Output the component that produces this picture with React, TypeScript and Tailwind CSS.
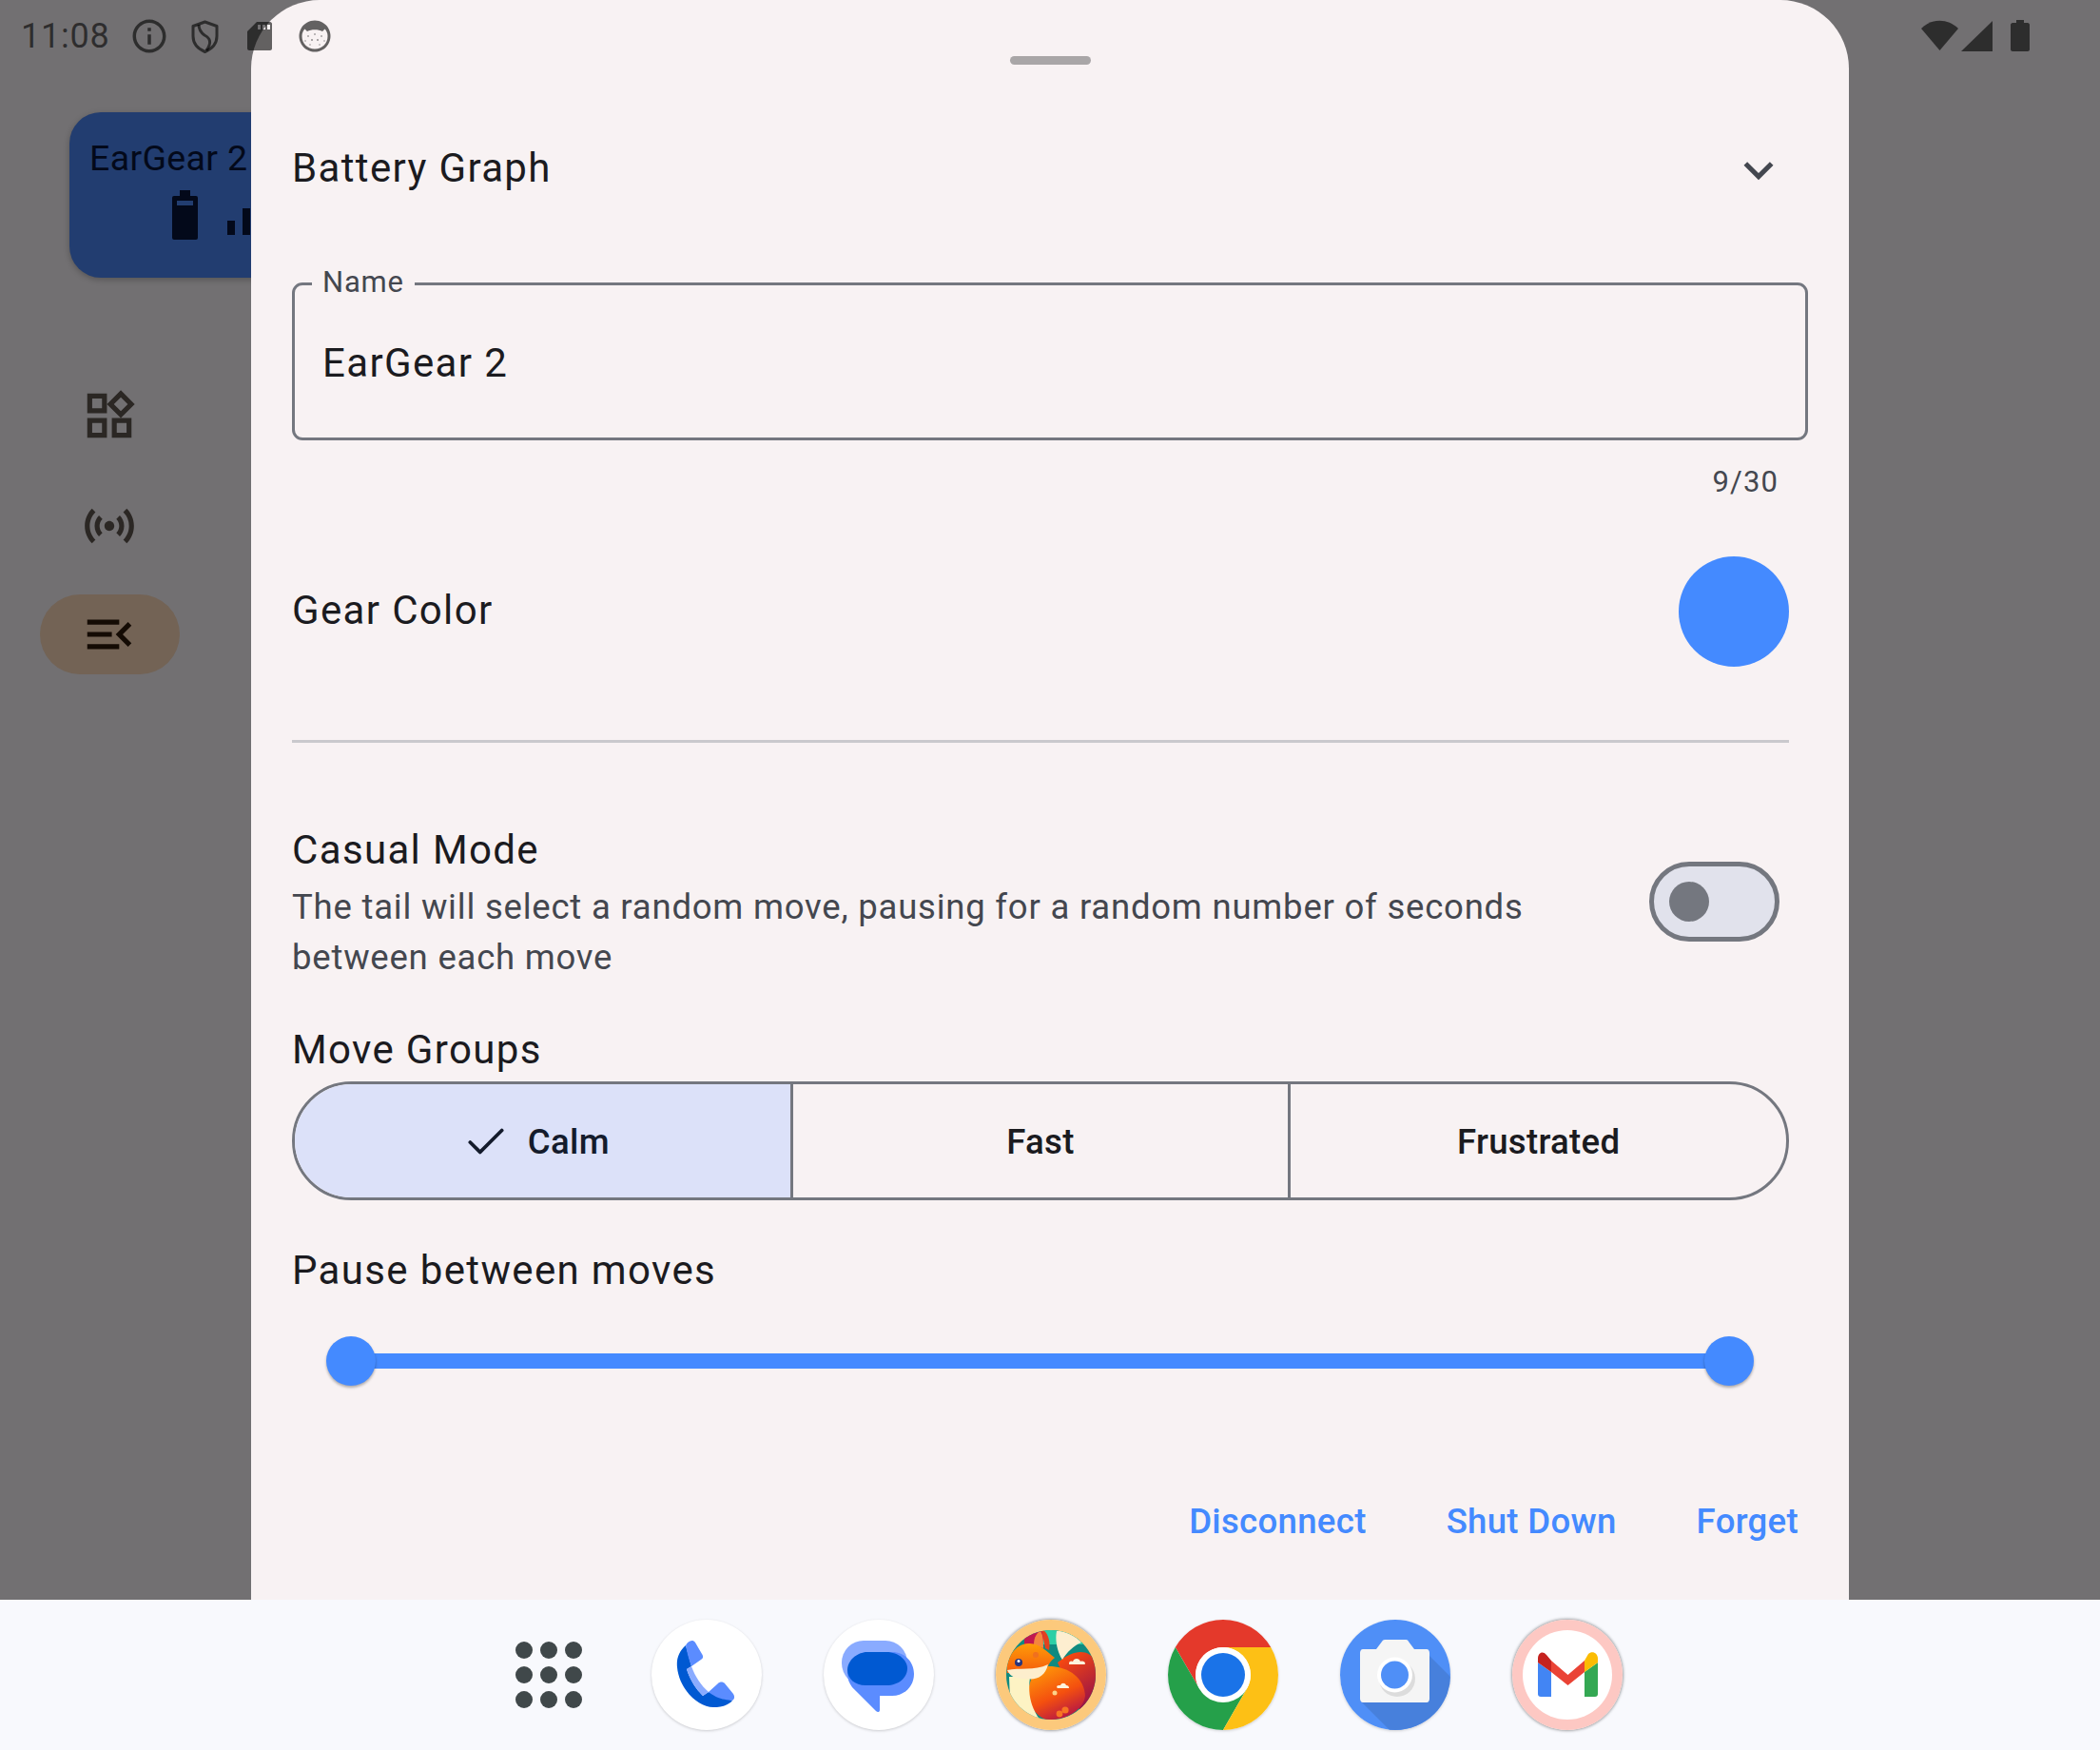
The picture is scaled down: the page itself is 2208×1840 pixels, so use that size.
import { Check } from "lucide-react";
import { MdExpandMore, MdMenuOpen, MdOutlineInfo, MdOutlineSensors, MdOutlineWidgets } from "react-icons/md";

function ShieldIcon() {
  return (
    <svg viewBox="0 0 29 35" className="h-[35px] w-[29px]" fill="none" stroke="currentColor" strokeWidth="3">
      <path d="M14.5 2 L27 6.5 V17 C27 25 21.5 30.5 14.5 33.5 C7.5 30.5 2 25 2 17 V6.5 Z" strokeLinejoin="round" />
      <path d="M8 5 C8 10 10 13 14 16 C20 19 22 24 16 32" />
    </svg>
  );
}

function SdIcon() {
  return (
    <svg viewBox="0 0 26 30" className="h-[30px] w-[26px]" fill="currentColor">
      <path
        fillRule="evenodd"
        d="M10 0 H24 C25 0 26 1 26 2 V28 C26 29 25 30 24 30 H2 C1 30 0 29 0 28 V10 Z M11 3 V8 H14 V3 Z M16 3 V8 H19 V3 Z M21 3 V8 H24 V3 Z"
      />
    </svg>
  );
}

function FaceIcon() {
  return (
    <svg viewBox="0 0 34 34" className="h-[34px] w-[34px]" fill="currentColor">
      <path
        fillRule="evenodd"
        d="M17 0.5 A16.5 16.5 0 1 1 16.99 0.5 Z M3.5 17 C3.5 25 9.5 30.5 17 30.5 C24.5 30.5 30.5 25 30.5 17 C30.5 14 29.5 11.5 27.5 9.5 L25 12 C21 9.5 13 9.5 9 12 L6.5 9.5 C4.5 11.5 3.5 14 3.5 17 Z"
      />
      <circle cx="10" cy="17" r="1" opacity="0.55" />
      <circle cx="17" cy="15" r="1" opacity="0.55" />
      <circle cx="24" cy="17" r="1" opacity="0.55" />
      <circle cx="14" cy="21" r="1" opacity="0.7" />
      <circle cx="20" cy="21" r="1" opacity="0.7" />
      <circle cx="7" cy="22" r="1" opacity="0.4" />
      <circle cx="27" cy="22" r="1" opacity="0.4" />
      <circle cx="12" cy="26" r="1" opacity="0.4" />
      <circle cx="22" cy="26" r="1" opacity="0.4" />
    </svg>
  );
}

function WifiSignal() {
  return (
    <svg viewBox="0 0 76 33" className="h-[33px] w-[76px]" fill="currentColor">
      <path d="M19.5 32 L0 9 C11 -2 28 -2 39 9 Z" />
      <path d="M42 33 L75 1 V33 Z" />
    </svg>
  );
}

function BatteryIcon() {
  return (
    <svg viewBox="0 0 20 33" className="h-[33px] w-[20px]" fill="currentColor">
      <path d="M6 0 H14 V3 H18 C19 3 20 4 20 5 V31 C20 32 19 33 18 33 H2 C1 33 0 32 0 31 V5 C0 4 1 3 2 3 H6 Z" />
    </svg>
  );
}

function PhoneApp() {
  return (
    <svg viewBox="0 0 116 116" className="h-full w-full">
      <path d="M36 27 C29 33 26 41 27 50 C29 72 48 92 65 92 C73 92 81 90 85 85 L60 76 L54 80 C46 72 40 62 37 52 L42 49 Z" fill="#0059d2" />
      <path d="M36 27 C38 23 43 20 46 24 L53 36 C55 39 54 41 52 42 L42 49 C39 41 37 33 36 27 Z" fill="#5b8cff" />
      <path d="M37 52 L42 49 C46 60 52 69 60 76 L54 80 C46 72 40 62 37 52 Z" fill="#8aabff" />
      <path d="M60 76 L70 67 C72 65 75 65 77 67 L86 78 C88 81 87 84 85 85 C78 84 70 84 60 76 Z" fill="#5b8cff" />
    </svg>
  );
}

function MessagesApp() {
  return (
    <svg viewBox="0 0 116 116" className="h-full w-full">
      <rect x="19" y="22" width="69" height="47" rx="23" fill="#8aabff" />
      <path d="M48 34 H72 C85 34 95 44 95 57 C95 70 85 80 72 80 H59 V95 C59 97 57 98 55 96 L30 71 C27 67 25 62 25 57 C25 44 35 34 48 34 Z" fill="#5b8cff" />
      <path d="M46 34 H66 C79 34 88 43 88 51 C88 61 79 69 66 69 H44 C33 69 25 62 25 53 C25 43 35 34 46 34 Z" fill="#0059d2" />
    </svg>
  );
}

function FoxApp() {
  return (
    <svg viewBox="0 0 116 116" className="h-full w-full">
      <defs>
        <clipPath id="foxClip">
          <circle cx="58" cy="58" r="47" />
        </clipPath>
        <linearGradient id="foxBody" x1="0.2" y1="0" x2="0.7" y2="1">
          <stop offset="0" stopColor="#ff9a08" />
          <stop offset="0.55" stopColor="#f4500f" />
          <stop offset="1" stopColor="#b0104a" />
        </linearGradient>
        <linearGradient id="foxTail" x1="0.3" y1="0" x2="0.8" y2="1">
          <stop offset="0" stopColor="#f8490f" />
          <stop offset="1" stopColor="#8a0a50" />
        </linearGradient>
        <linearGradient id="foxHead" x1="0.5" y1="0" x2="0.5" y2="1">
          <stop offset="0" stopColor="#ff9c08" />
          <stop offset="1" stopColor="#f45c0c" />
        </linearGradient>
      </defs>
      <circle cx="58" cy="58" r="58" fill="#fcc97c" />
      <g clipPath="url(#foxClip)">
        <rect x="0" y="0" width="116" height="116" fill="#0f8a80" />
        <rect x="40" y="8" width="60" height="18" fill="#2dcfa6" />
        <path d="M30 18 C38 10 48 10 50 12 L50 30 L30 30 Z" fill="#c2184f" />
        <path d="M40 26 C40 18 44 13 47 12 C50 16 50 24 50 30 Z" fill="#f4863f" />
        <path d="M48 10 C54 12 58 22 56 32 L52 30 Z" fill="#e2411f" />
        <path d="M65 45 C95 20 115 40 110 80 C105 100 90 100 85 90 Z" fill="url(#foxTail)" />
        <path d="M64 12 C72 10 86 18 90 24 C82 27 75 34 70 42 C65 34 62 22 64 12 Z" fill="#fdeed0" />
        <path d="M40 52 C60 44 92 52 94 80 C92 95 75 105 55 106 C38 100 32 85 35 70 Z" fill="url(#foxBody)" />
        <path d="M14 60 L36 60 C34 75 35 90 47 106 L30 106 L15 85 Z" fill="#fdf3c4" />
        <path d="M12 56 C10 44 18 26 34 25 C46 24 54 34 62 40 C58 43 56 46 55 49 C50 56 40 56 34 56 Z" fill="url(#foxHead)" />
        <path d="M12 53 C25 50 40 54 55 47 C52 60 42 64 32 62 C24 62 16 62 12 53 Z" fill="#fdeecd" />
        <circle cx="24" cy="45" r="4" fill="#26347c" />
        <circle cx="24" cy="43.5" r="1.5" fill="#fff" />
        <circle cx="42" cy="37" r="3" fill="#f0701f" />
        <path d="M77 46 C77 43 80 43 81 44 C82 40 88 40 89 44 C91 43 94 44 94 46 C94 47 93 47 92 47 H78 C77 47 77 47 77 46 Z" fill="#fdf3dc" />
        <path d="M64 71 C64 69 66 69 68 69 C69 66 73 66 74 69 C76 69 77 70 77 72 H65 Z" fill="#fdf3dc" />
        <circle cx="62" cy="77" r="2.5" fill="#fcd28a" />
        <circle cx="73" cy="95" r="3.6" fill="#f77522" />
        <circle cx="67" cy="99" r="3.4" fill="#f77522" />
      </g>
    </svg>
  );
}

function ChromeApp() {
  return (
    <svg viewBox="0 0 116 116" className="h-full w-full">
      <path d="M7.8 29 A58 58 0 0 1 108.2 29 L58 29 A29 29 0 0 0 33 72.5 Z" fill="#e4392b" />
      <path d="M7.8 29 A58 58 0 0 0 58 116 L83 72.5 L33 72.5 Z" fill="#25a04a" />
      <path d="M108.2 29 A58 58 0 0 1 58 116 L83 72.5 A29 29 0 0 0 58 29 Z" fill="#fdc015" />
      <circle cx="58" cy="58" r="29" fill="#fff" />
      <circle cx="58" cy="58" r="23" fill="#1a73e8" />
    </svg>
  );
}

function CameraApp() {
  return (
    <svg viewBox="0 0 116 116" className="h-full w-full">
      <defs>
        <clipPath id="camClip">
          <circle cx="58" cy="58" r="58" />
        </clipPath>
      </defs>
      <circle cx="58" cy="58" r="58" fill="#4f8ff7" />
      <path d="M21 85 L52 116 H116 V60 L88 32 Z" fill="#4780dc" clipPath="url(#camClip)" />
      <path d="M24 31 H38 L44 23 C45 21 47 21 48 21 H68 C70 21 71 21 72 23 L78 31 H91 C93 31 94 33 94 35 V83 C94 85 93 87 91 87 H24 C22 87 21 85 21 83 V35 C21 33 22 31 24 31 Z" fill="#f5f5f5" />
      <circle cx="60" cy="62" r="19" fill="#dcdcdc" />
      <circle cx="57.5" cy="58" r="18.5" fill="#fff" />
      <circle cx="57.5" cy="58" r="14.5" fill="#4f8ff7" />
    </svg>
  );
}

function GmailApp() {
  return (
    <svg viewBox="0 0 116 116" className="h-full w-full">
      <circle cx="58" cy="58" r="58" fill="#fdc8c3" />
      <circle cx="58" cy="58" r="47" fill="#fff" />
      <path d="M27 45 L41 55 V81 H30 C28 81 27 80 27 78 Z" fill="#4285f4" />
      <path d="M90 45 L76 55 V81 H87 C89 81 90 80 90 78 Z" fill="#34a853" />
      <path d="M76 43 V55 L90 45 V41 C90 35 84 32 80 36 Z" fill="#fbbc04" />
      <path d="M41 43 L58.5 58 L76 43 V55 L58.5 69 L41 55 Z" fill="#ea4335" />
      <path d="M27 41 V45 L41 55 V43 L36 37 C32 32 27 35 27 41 Z" fill="#c5221f" />
    </svg>
  );
}

function DockIcon({ children, ringed }: { children: React.ReactNode; ringed?: boolean }) {
  return (
    <div
      className={
        ringed
          ? "h-[116px] w-[116px] shrink-0 rounded-full bg-white shadow-[0_0_3px_1px_rgba(0,0,0,0.35)]"
          : "h-[116px] w-[116px] shrink-0 rounded-full bg-white shadow-[0_1px_3px_rgba(0,0,0,0.18)]"
      }
    >
      {children}
    </div>
  );
}

function NavigationRail() {
  return (
    <div className="flex w-[230px] flex-col items-center pt-[114px] text-[#2b2724]">
      <MdOutlineWidgets className="text-[62px]" />
      <MdOutlineSensors className="mt-[54px] text-[62px]" />
      <div className="mt-[41px] flex h-[84px] w-[147px] items-center justify-center rounded-full bg-[#736355] text-[#140b04]">
        <MdMenuOpen className="text-[62px]" />
      </div>
    </div>
  );
}

export default function App() {
  return (
    <div className="relative flex h-[1840px] w-[2208px] flex-col overflow-hidden bg-[#727072] font-['Roboto',sans-serif]">
      {/* what sits behind the sheet */}
      <div className="flex-1 pt-[118px]">
        <div className="ml-[73px] h-[174px] w-[400px] rounded-[33px] bg-[#223d70] pt-[23px] pl-[21px] shadow-[0_2px_6px_rgba(0,0,0,0.25)]">
          <div className="text-[37.5px] leading-[50px] tracking-[0.35px] text-[#03091a]">EarGear 2</div>
          <div className="flex items-end pl-[87px]">
            <div className="relative mt-[15px] h-[46px] w-[27px] rounded-[2px] bg-[#03091a]">
              <div className="absolute -top-[6px] left-[8px] h-[6px] w-[11px] bg-[#03091a]" />
              <div className="absolute top-[5px] left-[5px] h-[5px] w-[17px] bg-[#223d70]" />
            </div>
            <div className="mb-[5px] ml-[31px] h-[15px] w-[8px] bg-[#03091a]" />
            <div className="mb-[5px] ml-[8px] h-[28px] w-[8px] bg-[#03091a]" />
          </div>
        </div>
        <NavigationRail />
      </div>

      {/* bottom sheet */}
      <div className="absolute top-0 bottom-[158px] left-[264px] flex w-[1680px] flex-col rounded-t-[72px] bg-[#f8f2f3] px-[43px] pt-[59px]">
        <div className="mx-auto h-[9px] w-[85px] rounded-full bg-[#a9a6a7]" />
        <div className="mt-[55px] flex h-[108px] items-center justify-between pr-[21px]">
          <span className="-mt-[2px] text-[42px] tracking-[1.35px] text-[#1b1b1f]">Battery Graph</span>
          <MdExpandMore className="mt-[3px] text-[62px] text-[#44474f]" />
        </div>

        <div className="relative mt-[66px] flex h-[166px] items-center rounded-[11px] border-[3px] border-[#74777f] px-[29px] pt-[2px]">
          <span className="absolute -top-[22px] left-[18px] bg-[#f8f2f3] px-[11px] text-[31px] leading-[38px] tracking-[0.8px] text-[#44474f]">Name</span>
          <span className="text-[42px] tracking-[1.35px] text-[#1b1b1f]">EarGear 2</span>
        </div>
        <div className="mt-[24px] pr-[31px] text-right text-[31px] leading-[40px] tracking-[1.1px] text-[#44474f]">9/30</div>

        <div className="mt-[58px] flex h-[116px] items-center justify-between pr-[20px]">
          <span className="-mt-[3px] text-[42px] tracking-[1.35px] text-[#1b1b1f]">Gear Color</span>
          <div className="h-[116px] w-[116px] rounded-full bg-[#448aff]" />
        </div>
        <div className="mt-[77px] mr-[20px] h-[3px] bg-[#cac9cd]" />

        <div className="mt-[87px] flex items-center justify-between pr-[30px]">
          <div>
            <div className="text-[42px] leading-[52px] tracking-[1.35px] text-[#1b1b1f]">Casual Mode</div>
            <div className="mt-[7px] text-[36.5px] leading-[53px] tracking-[0.78px] text-[#44474f]">
              The tail will select a random move, pausing for a random number of seconds
              <br />
              between each move
            </div>
          </div>
          <div className="mb-[6px] flex h-[84px] w-[137px] items-center rounded-full border-[5px] border-[#74777f] bg-[#e1e2ec] pl-[16px]">
            <div className="h-[42px] w-[42px] rounded-full bg-[#74777f]" />
          </div>
        </div>

        <div className="mt-[45px] text-[42px] leading-[52px] tracking-[1.35px] text-[#1b1b1f]">Move Groups</div>
        <div className="mt-[7px] mr-[20px] flex h-[125px] overflow-hidden rounded-full border-[3px] border-[#74777f] text-[36.6px] font-medium tracking-[0.3px] text-[#1b1b1f]">
          <div className="flex flex-1 items-center justify-center border-r-[3px] border-[#74777f] bg-[#dce1f9] pt-[3px] text-[#141b2c]">
            <div className="mr-[14px] flex items-center gap-[19px]">
              <Check className="h-[50px] w-[50px]" strokeWidth={1.8} />
              <span>Calm</span>
            </div>
          </div>
          <div className="flex flex-1 items-center justify-center border-r-[3px] border-[#74777f] pt-[3px]">Fast</div>
          <div className="flex flex-1 items-center justify-center pt-[3px]">Frustrated</div>
        </div>

        <div className="mt-[48px] text-[42px] leading-[52px] tracking-[1.35px] text-[#1b1b1f]">Pause between moves</div>
        <div className="relative mt-[43px] ml-[36px] flex h-[52px] w-[1501px] items-center justify-between">
          <div className="absolute right-[10px] left-[10px] h-[16px] bg-[#448aff]" />
          <div className="relative h-[52px] w-[52px] rounded-full bg-[#448aff] shadow-[0_2px_3px_rgba(0,0,0,0.3)]" />
          <div className="relative h-[52px] w-[52px] rounded-full bg-[#448aff] shadow-[0_2px_3px_rgba(0,0,0,0.3)]" />
        </div>

        <div className="mt-[117px] flex justify-end gap-[84px] pr-[10px] text-[36.6px] leading-[52px] font-medium tracking-[0.3px] text-[#448aff]">
          <span>Disconnect</span>
          <span>Shut Down</span>
          <span>Forget</span>
        </div>
      </div>

      {/* status bar is drawn over both the scrim and the sheet */}
      <div className="absolute top-0 left-0 flex h-[76px] w-full items-center pr-[74px] pl-[22px] text-black/60">
        <span className="w-[92px] text-[36px] tracking-[0.8px]">11:08</span>
        <MdOutlineInfo className="ml-[22px] text-[42px]" />
        <div className="ml-[23px]"><ShieldIcon /></div>
        <div className="ml-[30px]"><SdIcon /></div>
        <div className="ml-[28px]"><FaceIcon /></div>
        <div className="mb-[2px] ml-auto flex items-center gap-[18px]">
          <WifiSignal />
          <BatteryIcon />
        </div>
      </div>

      {/* dock */}
      <div className="relative flex h-[158px] items-center bg-[#f8f9fd] pl-[519px]">
        <div className="grid h-[116px] w-[116px] grid-cols-3 place-items-center p-[19px]">
          {Array.from({ length: 9 }).map((_, i) => (
            <div key={i} className="h-[18px] w-[18px] rounded-full bg-[#40484a]" />
          ))}
        </div>
        <div className="ml-[50px] flex gap-[65px]">
          <DockIcon><PhoneApp /></DockIcon>
          <DockIcon><MessagesApp /></DockIcon>
          <DockIcon ringed><FoxApp /></DockIcon>
          <DockIcon><ChromeApp /></DockIcon>
          <DockIcon><CameraApp /></DockIcon>
          <DockIcon ringed><GmailApp /></DockIcon>
        </div>
      </div>
    </div>
  );
}
